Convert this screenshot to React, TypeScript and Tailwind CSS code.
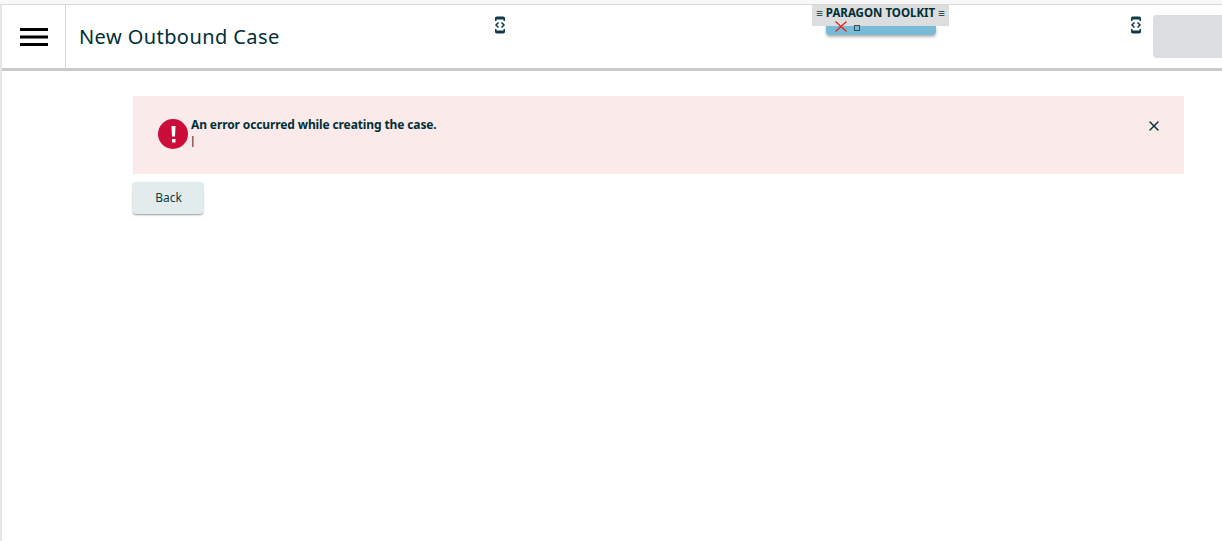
import { X } from "lucide-react";

function CodeIcon() {
  return (
    <svg width="12" height="18" viewBox="0 0 12 18" fill="none">
      <path d="M1 5V2.500C1 1.400 1.700.5 2.800.5h6.400C10.300.5 11 1.400 11 2.500V5H9.500V3.500h-7V5Z" fill="#0f3b47" />
      <path d="M1 13v2.500c0 1.100.7 2 1.800 2h6.400c1.100 0 1.800-.9 1.800-2V13H9.500v1.500h-7V13Z" fill="#0f3b47" />
      <path d="M4.500 6.500 2 9l2.500 2.500M7.500 6.500 10 9l-2.500 2.500" stroke="#0f3b47" strokeWidth="1.500" />
    </svg>
  );
}

export default function App() {
  return (
    <div className="relative h-[541px] w-[1222px] overflow-hidden bg-white font-['Noto_Sans','Open_Sans',sans-serif] text-[#002f36]">
      <div className="h-1 bg-[#f8f8f9]" />
      <div className="flex h-[537px] flex-col border-t border-t-[#d5d9d9] border-l-2 border-l-[#e6e6e6]">
        <header className="flex h-[66px] shrink-0 items-stretch border-b-[3px] border-b-[#c8caca] bg-white">
          <div className="flex w-[64px] items-center justify-center border-r border-r-[#d5d9d9]">
            <svg width="28" height="18" viewBox="0 0 28 18">
              <path d="M0 1.500h28M0 9h28M0 16.500h28" stroke="#000" strokeWidth="3" />
            </svg>
          </div>
          <h1 className="ml-[13px] mt-[18px] text-[20px] leading-[28px] tracking-[0.42px]">New Outbound Case</h1>
          <div className="ml-[214px] mt-[11px]"><CodeIcon /></div>
          <div className="ml-auto mt-[11px]"><CodeIcon /></div>
          <div className="ml-[11px] mt-[10px] h-[43px] w-[69px] rounded-l-[4px] bg-[#dcddde]" />
        </header>

        <main className="ml-[131px] mr-[38px] mt-[25px]">
          <div className="flex h-[78px] items-start bg-[#fbeaea]">
            <div className="ml-[25px] mt-[23px] flex size-[30px] shrink-0 items-center justify-center rounded-full bg-[#cc0c39]">
              <svg width="5" height="17" viewBox="0 0 5 17">
                <path d="M.5 0h4L4 10.500H1Z" fill="#fff" />
                <rect x="1" y="13" width="3.500" height="3.500" fill="#fff" />
              </svg>
            </div>
            <div className="ml-[3px] mt-[21px] text-[12px] leading-[16px] tracking-[-0.12px]">
              <div className="font-bold">An error occurred while creating the case.</div>
              <div className="-ml-[1px] -mt-[1px] text-[10px] font-semibold">|</div>
            </div>
            <X className="ml-auto mr-[22px] mt-[22px] text-[#002f36]" size={16} strokeWidth={2} />
          </div>
          <button className="mt-2 h-[32px] w-[70px] rounded-[3px] bg-[#e3ecec] pl-[1px] text-[12px] text-[#0a3d47] shadow-[0_1px_2px_rgba(0,0,0,0.4)]">Back</button>
        </main>
      </div>

      <div className="absolute left-[812px] top-[5px] w-[137px]">
        <div className="absolute left-[14px] top-[20px] h-[10px] w-[110px] rounded-b-[4px] bg-[#79bad6] shadow-[0_2px_3px_rgba(0,0,0,0.3)]" />
        <div className="relative h-[21px] bg-[#dcddde] text-center text-[11.5px] font-bold leading-[16px] whitespace-nowrap">≡ PARAGON TOOLKIT ≡</div>
        <div className="absolute left-[23px] top-[16px] flex items-center">
          <svg width="12" height="11" viewBox="0 0 12 11">
            <path d="M.5.5l11 10M11.500.5l-11 10" stroke="#e2231a" strokeWidth="1.300" />
          </svg>
          <div className="ml-[7px] mt-[2px] size-[6px] border border-[#33505a]" />
        </div>
      </div>
    </div>
  );
}
